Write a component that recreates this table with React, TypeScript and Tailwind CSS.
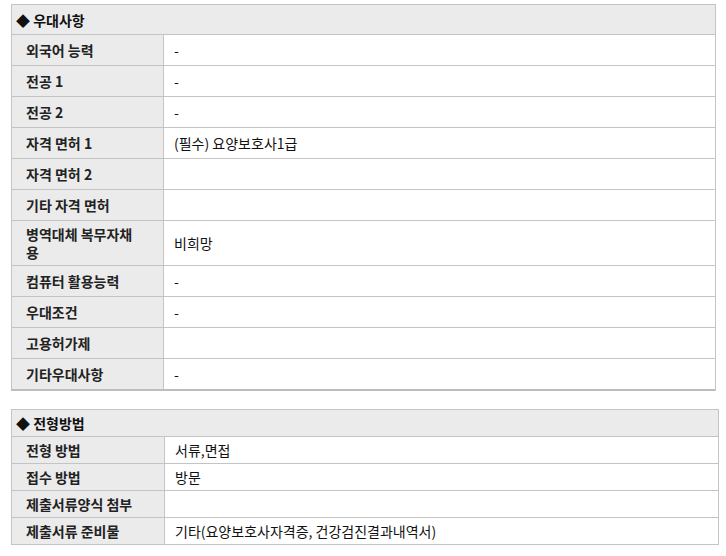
import type { ReactNode } from 'react';

type Row = { label: ReactNode; value?: string; tall?: boolean };

const prefs: Row[] = [
  { label: '외국어 능력', value: '-' },
  { label: '전공 1', value: '-' },
  { label: '전공 2', value: '-' },
  { label: '자격 면허 1', value: '(필수) 요양보호사1급' },
  { label: '자격 면허 2' },
  { label: '기타 자격 면허' },
  {
    label: (
      <>
        병역대체 복무자채
        <br />용
      </>
    ),
    value: '비희망',
    tall: true,
  },
  { label: '컴퓨터 활용능력', value: '-' },
  { label: '우대조건', value: '-' },
  { label: '고용허가제' },
  { label: '기타우대사항', value: '-' },
];

const screening: Row[] = [
  { label: '전형 방법', value: '서류,면접' },
  { label: '접수 방법', value: '방문' },
  { label: '제출서류양식 첨부' },
  { label: '제출서류 준비물', value: '기타(요양보호사자격증, 건강검진결과내역서)' },
];

function Section({
  title,
  rows,
  compact,
}: {
  title: string;
  rows: Row[];
  compact?: boolean;
}) {
  return (
    <div
      className={
        compact
          ? 'w-[708px] border border-[#c4c4c4]'
          : 'w-[705px] border border-[#c4c4c4] border-b-2 border-b-[#bdbdbd]'
      }
    >
      <div
        className={`flex items-center bg-[#ebebeb] pl-[4px] font-bold text-[#111] ${
          compact ? 'h-[26px]' : 'h-[29px]'
        }`}
      >
        ◆ {title}
      </div>
      {rows.map((r, i) => (
        <div
          key={i}
          className={`grid border-t border-[#c4c4c4] ${
            compact ? 'h-[27px] grid-cols-[153px_1fr]' : r.tall ? 'h-[45px] grid-cols-[152px_1fr]' : 'h-[31px] grid-cols-[152px_1fr]'
          }`}
        >
          <div className="flex items-center bg-[#ebebeb] border-r border-[#c4c4c4] pl-[14px] font-bold leading-[18px] text-[#222]">
            <div>{r.label}</div>
          </div>
          <div className="flex items-center bg-white pl-[10px] text-[#111]">
            {r.value ?? ''}
          </div>
        </div>
      ))}
    </div>
  );
}

export default function App() {
  return (
    <div
      className="min-h-[556px] bg-white pl-[11px] pt-[4px] text-[14px] leading-[16px]"
      style={{ fontFamily: '"Noto Sans CJK KR", "Noto Sans", sans-serif' }}
    >
      <Section title="우대사항" rows={prefs} />
      <div className="h-[18px]" />
      <Section title="전형방법" rows={screening} compact />
    </div>
  );
}
